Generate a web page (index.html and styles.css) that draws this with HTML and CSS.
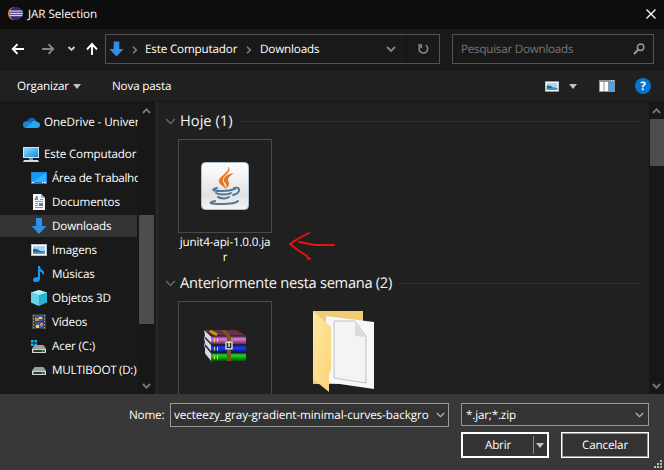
FILE: index.html
```html
<!DOCTYPE html>
<html lang="pt-BR">
<head>
<meta charset="utf-8">
<title>JAR Selection</title>
<link rel="stylesheet" href="styles.css">
</head>
<body>
<svg class="defs" aria-hidden="true">
  <defs>
    <linearGradient id="blue" x1="0" y1="0" x2="1" y2="1"><stop offset="0" stop-color="#8bdcff"/><stop offset="1" stop-color="#168bdc"/></linearGradient>
    <linearGradient id="tile" x1="0" y1="0" x2="0" y2="1"><stop offset="0" stop-color="#fff"/><stop offset=".7" stop-color="#e2e2e2"/><stop offset="1" stop-color="#f6f6f6"/></linearGradient>
    <linearGradient id="folder" x1="0" y1="0" x2="1" y2="1"><stop offset="0" stop-color="#ffe7a3"/><stop offset="1" stop-color="#fad477"/></linearGradient>
    <linearGradient id="purple" x1="0" y1="0" x2="0" y2="1"><stop offset="0" stop-color="#8c3a84"/><stop offset=".35" stop-color="#dc7ad2"/><stop offset="1" stop-color="#6c2464"/></linearGradient>
    <linearGradient id="navy" x1="0" y1="0" x2="0" y2="1"><stop offset="0" stop-color="#0a14a0"/><stop offset=".4" stop-color="#2440f0"/><stop offset="1" stop-color="#060a70"/></linearGradient>
    <linearGradient id="green" x1="0" y1="0" x2="0" y2="1"><stop offset="0" stop-color="#12a010"/><stop offset=".3" stop-color="#18d414"/><stop offset="1" stop-color="#064c06"/></linearGradient>
    <symbol id="down" viewBox="0 0 16 16"><path d="M5 0h6v8h4.6L8 16 .4 8H5z" fill="#2e8fe3"/></symbol>
    <symbol id="picture" viewBox="0 0 16 12"><path d="M0 0h16v12H0z" fill="#b9bdc1"/><path d="M1 1h14v10H1z" fill="#fff"/><path d="M2 2h12v8H2z" fill="#a8d5f7"/><path d="M2 5q4-1 7 2l5 .6V10H2z" fill="#2e6875"/><path d="M2 8h12v2H2z" fill="#4f97d1"/></symbol>
    <symbol id="chev" viewBox="0 0 10 6"><path d="M1 .8 5 4.8 9 .8" fill="none" stroke="currentColor" stroke-width="1.3"/></symbol>
    <symbol id="bold-chev" viewBox="0 0 10 6"><path d="M1 .8 5 4.8 9 .8" fill="none" stroke="currentColor" stroke-width="2.2"/></symbol>
    <symbol id="drive" viewBox="0 0 16 9"><path d="M3 0h10l3 4H0z" fill="#9b9fa1"/><path d="M1 4h14q1 0 1 1v3q0 1-1 1H1Q0 9 0 8V5q0-1 1-1z" fill="#dfe1e2"/><path d="M1.500 5.500h13V8h-13z" fill="#303536"/><path d="M11 6h2v1.500h-2z" fill="#29e03a"/></symbol>
  </defs>
</svg>
<div class="dialog">
  <header class="titlebar">
    <svg class="eclipse" viewBox="0 0 16 16"><circle cx="7" cy="8" r="7" fill="#f39222"/><circle cx="8.500" cy="8" r="7.200" fill="#35266e"/><path d="M1.500 5.500h14M1.500 8h14.500M1.500 10.300h14" stroke="#d4d0e4" stroke-width="1.400"/></svg>
    <span class="title">JAR Selection</span>
    <svg class="close" viewBox="0 0 10 10"><path d="M.5.5l9 9M9.500.5l-9 9" stroke="#fff" stroke-width="1.300"/></svg>
  </header>

  <nav class="navbar">
    <svg class="arrows" viewBox="0 0 90 16" fill="none" stroke="#fff" stroke-width="1.900">
      <path d="M24 8H13M17.500 3.200 12.800 8l4.700 4.800"/><path d="M42 8h11M48.500 3.200 53.200 8l-4.700 4.800" stroke="#858585"/><path d="m68.500 6 3 3 3-3" stroke="#ccc"/><path d="M92 14V3M87 8.500 92 3l5 5.500"/>
    </svg>
    <div class="address">
      <svg class="loc"><use href="#down"/></svg>
      <svg class="sep" viewBox="0 0 6 8"><path d="m1 .8 3.400 3.200L1 7.200" fill="none" stroke="#858585" stroke-width="1.500"/></svg>
      <span class="crumb-pc">Este Computador</span>
      <svg class="sep sep-two" viewBox="0 0 6 8"><path d="m1 .8 3.400 3.200L1 7.200" fill="none" stroke="#858585" stroke-width="1.500"/></svg>
      <span class="crumb-dl">Downloads</span>
      <svg class="drop" viewBox="0 0 10 7"><path d="m1 1 4 4 4-4" fill="none" stroke="#858585" stroke-width="1.900"/></svg>
      <span class="refresh"><svg viewBox="0 0 12 12"><path d="M8.800 2.200A4.300 4.300 0 1 1 3 3.100M1 2h3.300v3.200" fill="none" stroke="#858585" stroke-width="1.600"/></svg></span>
    </div>
    <div class="search"><span>Pesquisar Downloads</span>
      <svg viewBox="0 0 12 12"><circle cx="7.600" cy="4.200" r="3.200" fill="none" stroke="#999" stroke-width="1.500"/><path d="M5.300 6.500 1 11" stroke="#999" stroke-width="1.900"/></svg>
    </div>
  </nav>

  <div class="toolbar">
    <span class="organize">Organizar</span><i class="tri"></i>
    <span class="newfolder">Nova pasta</span>
    <svg class="view"><use href="#picture"/></svg><i class="tri tri-view"></i>
    <svg class="pane" viewBox="0 0 16 12"><path d="M0 0h16v12H0z" fill="#8e959b"/><path d="M1 2h3.500v9H1zM5.500 2H9v9H5.500z" fill="#fff"/><path d="M10 2h5v9h-5z" fill="#4ba5ee"/><path d="M12 .6h1M14 .6h1" stroke="#fff" stroke-width=".8"/></svg>
    <span class="help">?</span>
  </div>

  <main class="body">
    <aside class="tree">
      <div class="row top onedrive"><svg viewBox="0 0 16 11"><path d="M4 4a5 5 0 0 1 9-.6L16 8 8 9 0 7q0-3 4-3z" fill="#1264b5"/><path d="M3 5q4-1 6 2l-5 4H3A3 3 0 0 1 3 5z" fill="#168ad8"/><path d="M8 6q3-4 6-1a3 3 0 0 1 0 6H3z" fill="#2aa6ea"/></svg><span class="t-one">OneDrive - Univer</span></div>
      <div class="row top pc"><svg viewBox="0 0 16 15"><path d="M0 0h16v11H0z" fill="#c4e7f7"/><path d="M1 1h14v9H1z" fill="url(#blue)"/><path d="M6 11h4v2H6z" fill="#769aaa"/><path d="M1 13h14l1 2H0z" fill="#d2dce0"/></svg><span class="t-pc">Este Computador</span></div>
      <div class="row"><svg viewBox="0 0 16 12"><path d="M0 0h16v12H0z" fill="#1487dc"/><path d="M1 1h14v9H1z" fill="#159bf3"/><path d="M1 10 15 1v9z" fill="#2fb2ff"/><path d="M1 10.500h2M11 10.500h1M13 10.500h2" stroke="#fff"/></svg><span class="t-desk">Área de Trabalho</span></div>
      <div class="row"><svg viewBox="0 0 16 16"><path d="M2 0h8l4 4v12H2z" fill="#f5f6f7"/><path d="M10 0v4h4" fill="#aeb6bc"/><path d="m4 6 2-4v4M4 5h3" stroke="#2878b8" fill="none"/><path d="M9 5.500h3M4 7.500h8M4 9.500h3M4 11.500h3M4 13.500h8" stroke="#7897aa"/><path d="M8 9h4v3H8z" fill="#3d87b5"/></svg><span class="t-doc">Documentos</span></div>
      <div class="row selected"><svg viewBox="0 0 16 16"><use href="#down"/></svg><span class="t-down">Downloads</span></div>
      <div class="row"><svg viewBox="0 0 16 12"><use href="#picture"/></svg><span class="t-img">Imagens</span></div>
      <div class="row"><svg viewBox="0 0 16 16"><path d="M7 0h2q0 3 3 4.500 2 2 0 5 0-3-3-4V13q0 3-4 3-3 0-3-2 0-3 5-3z" fill="#159bf3"/></svg><span class="t-mus">Músicas</span></div>
      <div class="row"><svg viewBox="0 0 16 16"><path d="M0 2.500 8 0l8 2.500v10L8 16l-8-3.500z" fill="#25b4cd"/><path d="M0 2.500 8 0l8 2.500L8 5z" fill="#b5f1f6"/><path d="M0 2.500 8 5v11l-8-3.500z" fill="#64d6e3"/></svg><span class="t-3d">Objetos 3D</span></div>
      <div class="row"><svg viewBox="0 0 16 16"><path d="M1 0h14v15H1z" fill="#3c3c3c"/><path d="M2.500 1v14M13.500 1v14" stroke="#aaa" stroke-dasharray="1.500 1.500"/><path d="M4 1h8v6H4zM4 8h8v6H4z" fill="#315eaf"/><path d="M4 4h4v3H4zM9 9h3v3H9z" fill="#dc8a36"/><path d="M8 3h3v2H8zM5 11h3v3H5z" fill="#e5d24d"/></svg><span class="t-vid">Vídeos</span></div>
      <div class="row"><svg viewBox="0 0 16 13"><path d="M0 0h2.500v2.500H0zM3.500 0H6v2.500H3.500zM0 3.500h2.500V6H0zM3.500 3.500H6V6H3.500z" fill="#19b7f2"/><use href="#drive" x="1" y="5" width="14" height="8"/></svg><span class="t-acer">Acer (C:)</span></div>
      <div class="row"><svg viewBox="0 0 16 9"><use href="#drive" x="1" y="1" width="14" height="8"/></svg><span class="t-multi">MULTIBOOT (D:)</span></div>
    </aside>
    <div class="scroll tree-scroll"><svg class="up"><use href="#bold-chev"/></svg><i></i><svg><use href="#bold-chev"/></svg></div>
    <section class="files">
      <h2><svg><use href="#chev"/></svg><span class="g-today">Hoje (1)</span><hr></h2>
      <div class="grid first">
        <div class="file jar">
          <div class="thumb"><svg class="java" viewBox="0 0 48 48"><rect x=".5" y=".5" width="47" height="47" rx="4" fill="url(#tile)" stroke="#a6bfd5"/><path d="M27 4c3 8-13 10-8 18l6 5c-2-7-6-9 0-14 3-3 5-6 2-9zM33 11c-10 2-12 6-9 10 2 2 2 4 0 6 7-4 3-7 3-10 1-2 3-4 6-6z" fill="#e67624"/><g fill="none" stroke="#527895" stroke-width="2"><path d="M16 26c-7 2-4 3 6 3 6 0 9-1 12-2M15 31c3 2 12 2 15 0M17 35c4 2 8 2 11 0M33 26c7-2 7 5-1 7M14 39c-8 2-5 3 7 3 9 0 14-1 16-3" stroke-linecap="round"/></g></svg></div>
          <p><span class="jar-name">junit4-api-1.0.0.ja</span><span>r</span></p>
        </div>
        <svg class="mark" viewBox="0 0 48 30"><path d="m20 2-6 3-7 4-6 4 9 7 8 5 1 3 2-.5M10 11l16 3h19" fill="none" stroke="#f01010" stroke-width="1.900" stroke-linecap="round" stroke-linejoin="round"/></svg>
      </div>
      <h2><svg><use href="#chev"/></svg><span class="g-week">Anteriormente nesta semana (2)</span><hr></h2>
      <div class="grid">
        <div class="file"><div class="thumb cut"><svg class="rar" viewBox="0 0 42 35" preserveAspectRatio="none"><path d="m0 1 8 8v26l-7-9V20l-1-2 1-4-1-4 1-3z" fill="#d8d8e4"/><path d="M0 1h32l10 6H8z" fill="#64304c"/><path d="M7 8h35v8H7z" fill="url(#purple)"/><path d="M7 17h35v8H7z" fill="url(#navy)"/><path d="M7 26h35v8H7z" fill="url(#green)"/><path d="m1 9 7 8M1 17l7 9" stroke="#272744" stroke-width="1.500"/><path d="m6 2 7 4" stroke="#b5a900" stroke-width="3"/><path d="M10.500 10v4M13.500 10v4M10.500 19v4M13.500 19v4M10.500 28v4M13.500 28v4" stroke="#f3e528"/><path d="M17 1h4l6 7v26h-4V8z" fill="#80501e"/><path d="M22 14h6v7h-6z" fill="#28231e" stroke="#d3d3d3" stroke-width="1.500"/><path d="M25 13v6" stroke="#eee" stroke-width="1.500"/></svg></div></div>
        <svg class="folder" viewBox="0 0 64 84"><path d="M1 1h50v73H1z" fill="#f0cc72"/><path d="m14 6 48 6v67l-48-7z" fill="#f7f8fa"/><path d="M22 11h21l11 15v47l-32-5z" fill="#f2f4f5" stroke="#b9b6a8" stroke-width=".8"/><path d="M43 13v13l11 1z" fill="#d9dbdc"/><path d="m1 1 18 16v43l-2 3v19L1 69z" fill="url(#folder)"/></svg>
      </div>
    </section>
    <div class="scroll file-scroll"><svg class="up"><use href="#bold-chev"/></svg><i></i><svg><use href="#bold-chev"/></svg></div>
  </main>

  <footer class="footer">
    <label>Nome:</label>
    <div class="name-field"><span>vecteezy_gray-gradient-minimal-curves-background</span><svg><use href="#chev"/></svg></div>
    <div class="right">
      <div class="filter"><span>*.jar;*.zip</span><svg><use href="#chev"/></svg></div>
      <div class="buttons"><div class="open"><span>Abrir</span><i></i><b class="tri"></b></div><div class="cancel"><span>Cancelar</span></div></div>
    </div>
    <svg class="grip" viewBox="0 0 9 9"><path d="M6 0h2v2H6zM3 3h2v2H3zM6 3h2v2H6zM0 6h2v2H0zM3 6h2v2H3zM6 6h2v2H6z" fill="#bbb"/></svg>
  </footer>
</div>
</body>
</html>
```
FILE: styles.css
```css
* { box-sizing: border-box; }
body { margin: 0; background: #202020; color: #fff; font: 11.7px/16px "Open Sans", "Noto Sans", sans-serif; letter-spacing: -.18px; text-rendering: geometricPrecision; }
svg { display: block; flex: none; overflow: visible; }
span { white-space: nowrap; }
.defs { position: absolute; width: 0; height: 0; }
.dialog { width: 664px; height: 470px; display: flex; flex-direction: column; overflow: hidden; }
.titlebar { height: 29px; flex: none; background: #0d0d0d; display: flex; align-items: center; padding: 0 8px 2px 8px; }
.eclipse { width: 15px; height: 15px; margin-right: 5px; }
.title { letter-spacing: -.08px; }
.close { width: 10px; height: 10px; margin-left: auto; }
.navbar { height: 42px; flex: none; background: #191919; display: flex; align-items: center; padding: 0 10px 2px 0; }
.arrows { width: 90px; height: 16px; margin-right: 15px; }
.address { width: 335px; height: 30px; border: 1px solid #535353; display: flex; align-items: center; padding-left: 3px; }
.loc { width: 15px; height: 16px; }
.sep { width: 6px; height: 8px; margin: 1px 7px 0 8px; }
.crumb-pc, .crumb-dl { flex: none; }
.crumb-pc { width: 93px; }
.sep-two { margin-right: 8px; }
.drop { width: 10px; height: 7px; margin-left: auto; }
.refresh { width: 33px; height: 28px; margin-left: 10px; border-left: 1px solid #111; display: grid; place-items: center; }
.refresh svg { width: 12px; height: 12px; }
.search { width: 202px; height: 30px; margin-left: auto; border: 1px solid #535353; color: #777; display: flex; align-items: center; padding: 0 8px; }
.search span { letter-spacing: -.26px; }
.search svg { width: 12px; height: 12px; margin-left: auto; }
.toolbar { height: 31px; flex: none; background: #202020; border-bottom: 1px solid #171717; display: flex; align-items: center; padding: 0 13px 0 17px; }
.organize { width: 56px; }
.tri { border: 4px solid transparent; border-top: 5px solid #c2c2c2; border-bottom: 0; }
.newfolder { margin-left: 31px; }
.view { width: 14px; height: 11px; margin-left: auto; }
.tri-view { margin-left: 10px; }
.pane { width: 16px; height: 12px; margin-left: 22px; }
.help { width: 16px; height: 16px; margin-left: 20px; border-radius: 50%; background: #0874d1; font-weight: 700; text-align: center; }
.body { height: 292px; flex: none; display: flex; }
.tree { width: 138px; flex: none; background: #191919; padding-top: 9px; overflow: hidden; }
.row { height: 22px; margin-bottom: 2px; display: flex; align-items: center; gap: 5px; padding-left: 31px; width: 138px; overflow: hidden; }
.row svg { width: 16px; max-height: 16px; }
.top { padding-left: 23px; }
.onedrive { margin-bottom: 10px; }
.t-one { letter-spacing: -.1px; }
.t-desk { letter-spacing: -.3px; }
.t-multi { letter-spacing: -.3px; }
.selected { background: #333; width: 137px; }
.scroll { background: #171717; color: #767676; display: flex; flex-direction: column; align-items: center; flex: none; padding: 6px 0 5px; }
.scroll i { background: #4d4d4d; width: 15px; }
.scroll svg { width: 9px; height: 6px; margin-top: auto; }
.scroll .up { transform: rotate(180deg); margin-top: 0; }
.tree-scroll { width: 17px; }
.tree-scroll i { height: 109px; margin-top: 101px; }
.file-scroll { width: 15px; }
.file-scroll i { height: 47px; margin-top: 5px; width: 14px; margin-left: 1px; }
.files { flex: 1; min-width: 0; border-left: 2px solid #272727; margin-left: 1px; padding: 9px 7px 0 7px; overflow: hidden; background: #202020; }
h2 { margin: 0; font-size: 14.7px; line-height: 20px; height: 20px; font-weight: 400; display: flex; align-items: center; color: #f4f4f4; }
h2 svg { width: 11px; height: 7px; margin-right: 4px; color: #676767; }
h2 hr { flex: 1; border: 0; border-top: 1px solid #303030; margin: 0 0 0 7px; }
.g-today { letter-spacing: 0; }
.g-week { letter-spacing: -.3px; }
.grid { display: flex; margin-top: 8px; padding-left: 13px; }
.first { height: 134px; }
.file { width: 94px; flex: none; }
.thumb { height: 94px; border: 1px solid #4a4a4a; display: grid; place-items: center; }
.java { width: 48px; height: 48px; }
.file p { margin: 2px 0 0; line-height: 15px; display: flex; flex-direction: column; align-items: center; }
.mark { width: 48px; height: 30px; margin: 92px 0 0 17px; }
.rar { width: 42px; height: 33px; margin-top: -6px; margin-left: 0; }
.folder { width: 64px; height: 84px; margin: 9px 0 0 40px; }
.footer { height: 76px; flex: none; background: #383838; display: flex; align-items: flex-start; padding: 9px 1px 0 129px; }
.footer label { width: 41px; margin-top: 4px; }
.name-field, .filter { background: #333; border: 1px solid #999; display: flex; align-items: center; }
.name-field { width: 279px; height: 24px; padding: 1px 3px; }
.name-field span { width: 255px; overflow: hidden; letter-spacing: -.1px; }
.name-field svg, .filter svg { width: 9px; height: 6px; margin-left: auto; color: #bbb; }
.right { width: 188px; margin-left: 12px; }
.filter { height: 23px; padding: 0 4px; }
.buttons { display: flex; justify-content: space-between; margin-top: 6px; }
.open, .cancel { width: 88px; height: 26px; background: #333; border: 2px solid #fff; display: flex; align-items: center; }
.open span { width: 70px; text-align: center; }
.open i { width: 1px; height: 18px; background: #888; margin-right: 2px; }
.cancel { border: 1px solid #fff; box-shadow: inset 0 0 0 1px #999; justify-content: center; }
.grip { width: 9px; height: 9px; margin: 57px 0 0 auto; }
```
